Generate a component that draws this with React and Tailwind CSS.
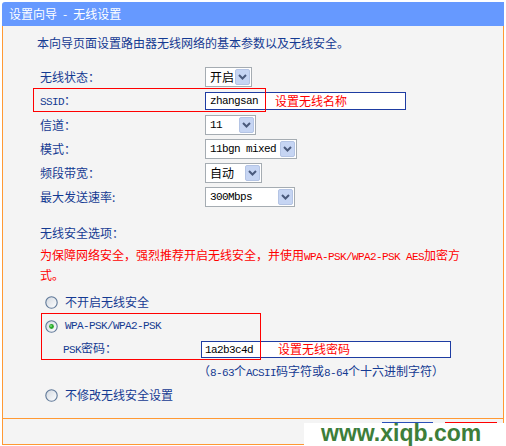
import React from "react";

const CJK = "font-['Noto_Sans_CJK_SC',sans-serif]";
const LBL = "text-[#143A92]";

function M({ children }) {
  return (
    <span className="font-['Liberation_Mono',monospace] text-[11px] tracking-[-0.6px]">
      {children}
    </span>
  );
}

function Arrow() {
  return (
    <div className="my-[1px] mr-[1px] flex w-[15px] items-center justify-center rounded-[2px] border border-[#B4C4E4] bg-[#C6D5F3]">
      <svg width="9" height="6" viewBox="0 0 9 6">
        <path d="M1 1 L4.5 4.5 L8 1" fill="none" stroke="#4A5A7C" strokeWidth="2" />
      </svg>
    </div>
  );
}

function Sel({ w, children }) {
  return (
    <div className={`flex h-[20px] border border-[#A5ACB2] bg-white ${w}`}>
      <div className="flex flex-1 items-center pl-[4px] text-[12px] text-black">{children}</div>
      <Arrow />
    </div>
  );
}

function Radio({ checked }) {
  return (
    <svg width="13" height="13" viewBox="0 0 13 13" className="shrink-0">
      <defs>
        <linearGradient id="rg" x1="0" y1="0" x2="1" y2="1">
          <stop offset="0" stopColor="#D2D8E0" />
          <stop offset="1" stopColor="#FFFFFF" />
        </linearGradient>
      </defs>
      <circle cx="6.5" cy="6.5" r="5.7" fill="url(#rg)" stroke="#5F7898" strokeWidth="1.1" />
      {checked && <circle cx="6.5" cy="6.5" r="2.4" fill="#2AA82A" />}
      {checked && <circle cx="6" cy="6" r="0.9" fill="#7FE07F" />}
    </svg>
  );
}

function Row({ label, children }) {
  return (
    <div className="flex h-[24px] items-center">
      <div className={`w-[202px] shrink-0 pl-[37px] text-[12px] ${LBL}`}>{label}</div>
      {children}
    </div>
  );
}

export default function App() {
  return (
    <div className={`relative h-[446px] w-[506px] bg-white pl-[2px] pt-[2px] ${CJK}`}>
      <div className="w-[502px]">
        <div className="flex h-[24px] items-center rounded-tl-[3px] bg-[#6699FF] pl-[7px] text-[12px] text-white">
          <span>设置向导</span>
          <span className="mx-[6px]">-</span>
          <span>无线设置</span>
        </div>
        <div className="border-x border-b border-[#FF9933] bg-[#F4F4F4] pb-[11px] pt-[5px]">
          <div className={`h-[24px] pl-[34px] text-[12px] leading-[24px] ${LBL}`}>
            本向导页面设置路由器无线网络的基本参数以及无线安全。
          </div>
          <div className="mt-[10px]">
            <Row label="无线状态：">
              <Sel w="w-[47px]">开启</Sel>
            </Row>
            <Row label={<><M>SSID</M>：</>}>
              <div className="flex h-[18px] w-[201px] items-center border border-[#1E3CA2] bg-white pl-[4px]">
                <M>zhangsan</M>
                <span className="ml-[17px] text-[12px] text-[#FF0000]">设置无线名称</span>
              </div>
            </Row>
            <Row label="信道：">
              <Sel w="w-[51px]"><M>11</M></Sel>
            </Row>
            <Row label="模式：">
              <Sel w="w-[92px]"><M>11bgn mixed</M></Sel>
            </Row>
            <Row label="频段带宽：">
              <Sel w="w-[57px]">自动</Sel>
            </Row>
            <Row label="最大发送速率:">
              <Sel w="w-[90px]"><M>300Mbps</M></Sel>
            </Row>
          </div>
          <div className={`mt-[12px] flex h-[24px] items-center pl-[37px] text-[12px] ${LBL}`}>
            无线安全选项：
          </div>
          <div className="mt-[1px] pl-[37px] text-[12px] leading-[18px] text-[#FF0000]">
            <div className="whitespace-nowrap">
              为保障网络安全，强烈推荐开启无线安全，并使用<M>WPA-PSK/WPA2-PSK AES</M>加密方
            </div>
            <div>式。</div>
          </div>
          <div className="mt-[6px]">
            <div className={`flex h-[24px] items-center gap-[7px] pl-[42px] text-[12px] ${LBL}`}>
              <Radio />
              <span>不开启无线安全</span>
            </div>
            <div className={`flex h-[24px] items-center gap-[7px] pl-[42px] text-[12px] ${LBL}`}>
              <Radio checked />
              <M>WPA-PSK/WPA2-PSK</M>
            </div>
            <div className={`flex h-[22px] items-center text-[12px] ${LBL}`}>
              <div className="w-[198px] shrink-0 pl-[60px]">
                <M>PSK</M>密码：
              </div>
              <div className="flex h-[17px] w-[250px] items-center border border-[#1E3CA2] bg-white pl-[3px]">
                <span className="text-black"><M>1a2b3c4d</M></span>
                <span className="ml-[25px] text-[12px] text-[#FF0000]">设置无线密码</span>
              </div>
            </div>
            <div className={`mt-[2px] h-[18px] pl-[195px] text-[12px] leading-[18px] ${LBL}`}>
              （<M>8-63</M>个<M>ACSII</M>码字符或<M>8-64</M>个十六进制字符）
            </div>
            <div className={`mt-[3px] flex h-[24px] items-center gap-[7px] pl-[42px] text-[12px] ${LBL}`}>
              <Radio />
              <span>不修改无线安全设置</span>
            </div>
          </div>
        </div>
        <div className="flex h-[26px] justify-end gap-[12px] border-x border-b border-[#FF9933] bg-[#F4F4F4] pr-[6px] pt-[3px]">
          <div className="h-[20px] w-[51px] border border-[#2A4FB8] bg-[#F4F4F4]"></div>
          <div className="h-[20px] w-[52px] border border-[#FF0000] bg-[#F4F4F4]"></div>
        </div>
      </div>

      <div className="pointer-events-none absolute left-[33px] top-[88px] h-[24px] w-[233px] border border-[#FF0000]"></div>
      <div className="pointer-events-none absolute left-[41px] top-[313px] h-[47px] w-[220px] border border-[#FF0000]"></div>

      <div className="absolute left-[304px] top-[423px] h-[23px] w-[202px] bg-white pl-[17px] font-['Liberation_Sans',sans-serif] text-[23px] font-bold leading-[20px] text-[#3D7E3A]">
        www.xiqb.com
      </div>
    </div>
  );
}
